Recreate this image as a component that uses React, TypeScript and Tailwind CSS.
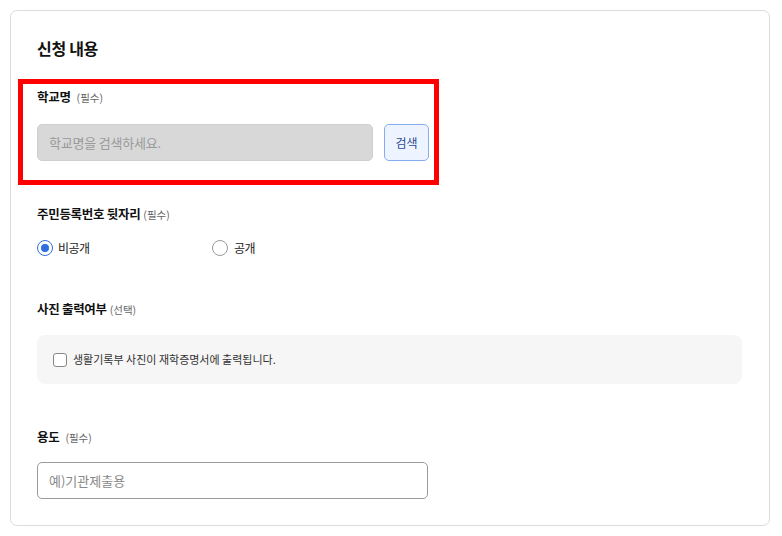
import React from 'react'

const font = { fontFamily: '"Noto Sans CJK KR", "Noto Sans", sans-serif' }

const Label = ({ title, note, gap }: { title: string; note: string; gap: string }) => (
  <div className="flex items-baseline h-[20px] leading-[20px]">
    <span className="text-[12.5px] tracking-[-0.3px] font-bold text-[#111]">{title}</span>
    <span className={`text-[10.5px] text-[#666] ${gap}`}>{note}</span>
  </div>
)

const App = () => {
  return (
    <div style={font} className="w-[782px] h-[536px] bg-white pt-[10px] pl-[10px]">
      <div className="w-[760px] h-[516px] border border-[#dcdcdc] rounded-[7px] px-[26px] pt-[25px]">
        <h2 className="text-[16px] tracking-[-0.3px] leading-[24px] font-bold text-[#111]">신청 내용</h2>

        {/* 학교명 */}
        <div className="relative mt-[27px]">
          <Label title="학교명" note="(필수)" gap="ml-[6px]" />
          <div className="flex gap-[11px] mt-[17px]">
            <input
              disabled
              placeholder="학교명을 검색하세요."
              className="w-[336px] h-[37px] bg-[#d8d8d8] border border-[#cfcfcf] rounded-[5px] pl-[11px] text-[13px] tracking-[-0.2px] placeholder:text-[#9a9a9a]"
            />
            <button className="w-[45px] h-[37px] bg-[#eef4ff] border border-[#84acf0] rounded-[5px] text-[12px] text-[#2b4c8c]">
              검색
            </button>
          </div>
          <div className="absolute -left-[19px] -top-[8px] w-[421px] h-[106px] border-[5px] border-[#ff0000] pointer-events-none" />
        </div>

        {/* 주민등록번호 */}
        <div className="mt-[43px]">
          <Label title="주민등록번호 뒷자리" note="(필수)" gap="ml-[3px]" />
          <div className="flex mt-[14px] h-[20px] items-center text-[12px] tracking-[-0.5px] text-[#222]">
            <label className="flex items-center w-[175px]">
              <span className="w-[16px] h-[16px] rounded-full border border-[#2f6fdf] flex items-center justify-center">
                <span className="w-[8px] h-[8px] rounded-full bg-[#2f6fdf]" />
              </span>
              <span className="ml-[5px]">비공개</span>
            </label>
            <label className="flex items-center">
              <span className="w-[16px] h-[16px] rounded-full border border-[#9a9a9a]" />
              <span className="ml-[6px]">공개</span>
            </label>
          </div>
        </div>

        {/* 사진 출력여부 */}
        <div className="mt-[41px]">
          <Label title="사진 출력여부" note="(선택)" gap="ml-[3px]" />
          <div className="mt-[16px] w-[705px] h-[49px] bg-[#f6f6f6] rounded-[8px] flex items-center pl-[16px]">
            <span className="w-[14px] h-[14px] border border-[#888] rounded-[3px] bg-white" />
            <span className="ml-[6px] text-[11px] text-[#333]">생활기록부 사진이 재학증명서에 출력됩니다.</span>
          </div>
        </div>

        {/* 용도 */}
        <div className="mt-[43px]">
          <Label title="용도" note="(필수)" gap="ml-[6px]" />
          <input
            placeholder="예)기관제출용"
            className="mt-[15px] w-[391px] h-[37px] border border-[#9a9a9a] rounded-[5px] pl-[11px] text-[13px] placeholder:text-[#888] outline-none"
          />
        </div>
      </div>
    </div>
  )
}

export default App
